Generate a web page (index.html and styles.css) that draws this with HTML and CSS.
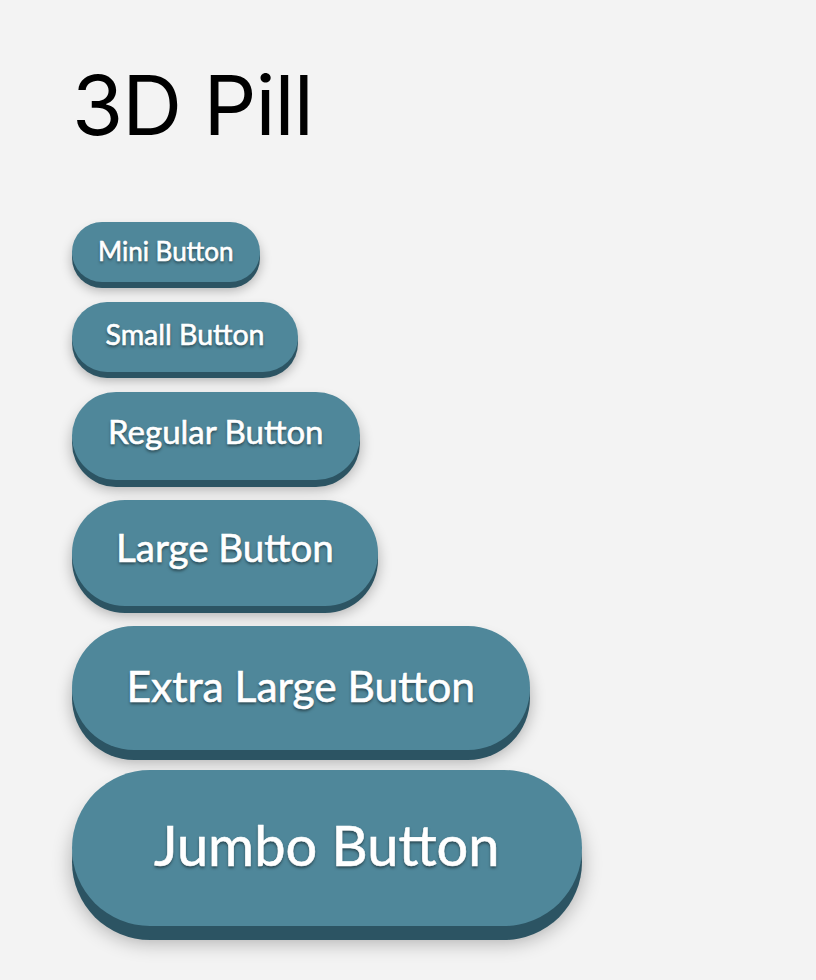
FILE: index.html
```html
<!DOCTYPE html>
<html lang="en">
<head>
<meta charset="utf-8">
<title>3D Pill</title>
<link rel="stylesheet" href="styles.css">
</head>
<body>
<main class="page">
  <h1 class="title">3D Pill</h1>
  <div class="stack">
    <button class="pill pill-mini">Mini Button</button>
    <button class="pill pill-small">Small Button</button>
    <button class="pill pill-regular">Regular Button</button>
    <button class="pill pill-large">Large Button</button>
    <button class="pill pill-xl">Extra Large Button</button>
    <button class="pill pill-jumbo">Jumbo Button</button>
  </div>
</main>
</body>
</html>
```
FILE: styles.css
```css
html, body {
  margin: 0;
  padding: 0;
  background: #f3f3f3;
}

.page {
  padding: 55px 0 60px 72px;
}

.title {
  margin: 0 0 67px 0;
  font-family: Inter, "Liberation Sans", sans-serif;
  font-weight: 400;
  font-size: 83px;
  line-height: 100px;
  color: #000;
  letter-spacing: -1px;
}

.stack {
  display: flex;
  flex-direction: column;
  align-items: flex-start;
  gap: 20px;
}

/* pill face with a solid darker edge underneath for the raised look */
.pill {
  box-sizing: border-box;
  display: inline-flex;
  align-items: center;
  justify-content: center;
  border: 0;
  margin: 0;
  border-radius: 999px;
  background: #4f879a;
  color: #fff;
  font-family: Lato, "Open Sans", sans-serif;
  font-weight: 400;
  line-height: 1;
  text-shadow: 0 2px 3px rgba(0, 0, 0, 0.5);
  -webkit-text-stroke: 0.6px #fff;
  cursor: pointer;
  box-shadow: 0 6px 0 #2c5463, 0 8px 12px rgba(0, 0, 0, 0.3);
}

.pill-mini {
  height: 60px;
  padding: 0 26px 3px;
  font-size: 26px;
}

.pill-small {
  height: 70px;
  padding: 0 33.5px 6px;
  font-size: 28.5px;
}

.pill-regular {
  height: 88px;
  padding: 0 36px 9px;
  font-size: 33px;
  box-shadow: 0 7px 0 #2c5463, 0 9px 14px rgba(0, 0, 0, 0.3);
}

.pill-large {
  height: 106px;
  padding: 0 44px 11px;
  font-size: 38.5px;
  box-shadow: 0 7px 0 #2c5463, 0 9px 14px rgba(0, 0, 0, 0.3);
}

.pill-xl {
  height: 124px;
  padding: 0 54.5px 4px;
  font-size: 42.5px;
  box-shadow: 0 10px 0 #2c5463, 0 12px 16px rgba(0, 0, 0, 0.3);
}

.pill-jumbo {
  height: 156px;
  padding: 0 82px 6px;
  font-size: 56px;
  box-shadow: 0 14px 0 #2c5463, 0 16px 20px rgba(0, 0, 0, 0.3);
}
```
